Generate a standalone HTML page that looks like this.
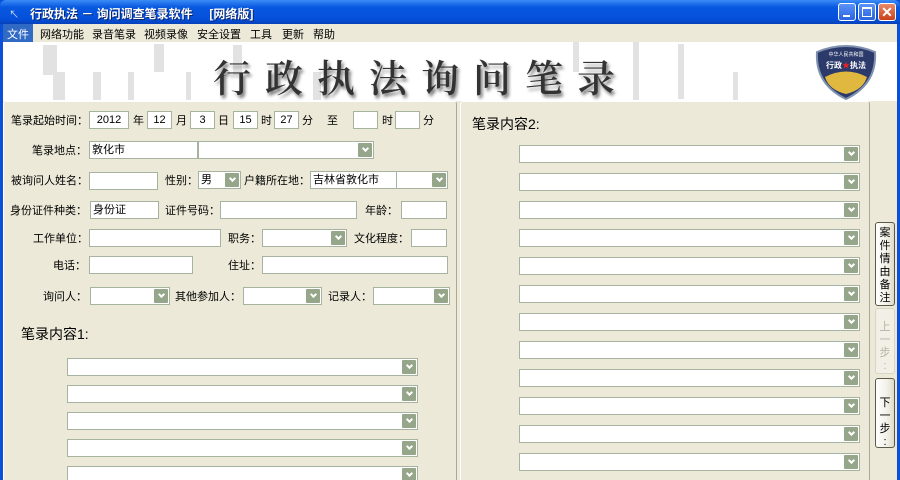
<!DOCTYPE html>
<html style="width:900px;height:480px;overflow:hidden"><head><meta charset="utf-8"><style>
*{margin:0;padding:0;box-sizing:border-box}
body{width:900px;height:480px;overflow:hidden;background:#0A50D8;font-family:"Liberation Sans","Noto Sans CJK SC",sans-serif;font-size:11px;color:#000;position:relative}
.a{position:absolute}
#title{left:0;top:0;width:900px;height:24px;background:linear-gradient(#3A8CF5,#0858E0 30%,#0550DA 80%,#0640B8);border-radius:6px 6px 0 0}
#title span{position:absolute;left:30px;top:5px;color:#fff;font-weight:bold;font-size:12px;text-shadow:1px 1px #0a246a;white-space:pre}
.wb{position:absolute;top:3px;width:18px;height:18px;border:1px solid #fff;border-radius:3px;background:linear-gradient(#5a93f8,#2a64e0)}
#menu{left:3px;top:24px;width:894px;height:18px;background:#ECE9D8}
#menu span{position:absolute;top:2px;font-size:11px}
#banner{left:3px;top:42px;width:894px;height:59px;background:#fff;overflow:hidden}
.bar{position:absolute;background:#e2e2e2}
#body{left:3px;top:101px;width:894px;height:379px;background:#ECE9D8;overflow:hidden}
.panel{position:absolute;border:1px solid #fff;border-right-color:#aca899;border-bottom-color:#aca899;border-radius:3px;background:#ECE9D8}
.in,.cb{position:absolute;height:18px;background:#fff;border:1px solid #a5b3a0;font-size:11px;padding:1px 2px;line-height:14px}
.cb:after{content:"";position:absolute;right:1px;top:1px;width:14px;height:14px;background:#96A68A;border-radius:1px}
.cb i{position:absolute;right:5px;top:4px;width:5px;height:5px;border-right:2px solid #fff;border-bottom:2px solid #fff;transform:rotate(45deg);z-index:2}
.l{position:absolute;font-size:11px;white-space:nowrap}
.c{text-align:center}
.btn{position:absolute;width:20px;border:1px solid #5a5a48;border-radius:3px;background:linear-gradient(90deg,#fff,#f3f1e8 60%,#dedbcb);font-size:11px;line-height:13px;text-align:center;padding-top:5px}
</style></head><body>
<div id="title" class="a"><span>行政执法 － 询问调查笔录软件     [网络版]</span>
<div style="position:absolute;left:9px;top:6px;color:#cde;font-size:10px">↖</div>
<div class="wb" style="left:838px"><div style="position:absolute;left:4px;top:11px;width:7px;height:2px;background:#fff"></div></div>
<div class="wb" style="left:858px"><div style="position:absolute;left:3px;top:3px;width:10px;height:10px;border:1px solid #fff;border-top-width:2px"></div></div>
<div class="wb" style="left:878px;background:linear-gradient(#e88a6a,#c9411a);color:#fff;font-weight:bold;font-size:14px;line-height:16px;text-align:center">✕</div>
</div>
<div id="menu" class="a">
<span style="left:0;top:0;height:18px;padding:2px 4px;background:#316AC5;color:#fff">文件</span>
<span style="left:37px">网络功能</span><span style="left:89px">录音笔录</span><span style="left:141px">视频录像</span><span style="left:194px">安全设置</span><span style="left:247px">工具</span><span style="left:279px">更新</span><span style="left:310px">帮助</span>
</div>
<div id="banner" class="a">
<div class="bar" style="left:40px;top:3px;width:14px;height:30px"></div>
<div class="bar" style="left:50px;top:30px;width:12px;height:28px"></div>
<div class="bar" style="left:90px;top:30px;width:8px;height:28px"></div>
<div class="bar" style="left:125px;top:30px;width:6px;height:28px"></div>
<div class="bar" style="left:151px;top:2px;width:10px;height:28px"></div>
<div class="bar" style="left:183px;top:30px;width:5px;height:28px"></div>
<div class="bar" style="left:230px;top:3px;width:9px;height:30px"></div>
<div class="bar" style="left:310px;top:30px;width:8px;height:28px"></div>
<div class="bar" style="left:570px;top:0;width:6px;height:30px"></div>
<div class="bar" style="left:630px;top:0;width:6px;height:58px"></div>
<div class="bar" style="left:675px;top:2px;width:6px;height:55px"></div>
<div class="bar" style="left:730px;top:30px;width:5px;height:28px"></div>
<div style="position:absolute;left:210px;top:6px;font-family:'Noto Serif CJK SC',serif;font-size:38px;font-weight:600;letter-spacing:14px;color:#333;text-shadow:2px 3px 3px #777;white-space:nowrap">行政执法询问笔录</div>
<svg style="position:absolute;left:810px;top:2px" width="66" height="56" viewBox="0 0 66 56"><path d="M4 8 Q33 -4 62 8 Q64 40 33 55 Q2 40 4 8Z" fill="#2b3a6a" stroke="#8090b0" stroke-width="2"/><path d="M12 33 Q33 22 54 33 Q50 46 33 50 Q16 46 12 33Z" fill="#e0b840"/><text x="33" y="12" font-size="5" fill="#fff" text-anchor="middle" font-family="Noto Sans CJK SC">中华人民共和国</text><text x="33" y="24" font-size="8" fill="#fff" text-anchor="middle" font-weight="bold" font-family="Noto Sans CJK SC">行政<tspan fill="#e22">★</tspan>执法</text></svg>
</div>
<div id="body" class="a">
<div class="panel" style="left:0;top:0;width:454px;height:390px"></div>
<div class="panel" style="left:457px;top:0;width:410px;height:390px"></div>
</div>

<div class="l" style="left:11px;top:112px">笔录起始时间：</div>
<div class="in c" style="left:89px;top:111px;width:40px">2012</div><div class="l" style="left:133px;top:112px">年</div>
<div class="in c" style="left:147px;top:111px;width:25px">12</div><div class="l" style="left:176px;top:112px">月</div>
<div class="in c" style="left:190px;top:111px;width:25px">3</div><div class="l" style="left:218px;top:112px">日</div>
<div class="in c" style="left:233px;top:111px;width:25px">15</div><div class="l" style="left:261px;top:112px">时</div>
<div class="in c" style="left:274px;top:111px;width:25px">27</div><div class="l" style="left:302px;top:112px">分</div>
<div class="l" style="left:327px;top:112px">至</div>
<div class="in" style="left:353px;top:111px;width:25px"></div><div class="l" style="left:382px;top:112px">时</div>
<div class="in" style="left:395px;top:111px;width:25px"></div><div class="l" style="left:423px;top:112px">分</div>

<div class="l" style="left:32px;top:142px">笔录地点：</div>
<div class="in" style="left:89px;top:141px;width:109px">敦化市</div>
<div class="cb" style="left:198px;top:141px;width:176px"><i></i></div>

<div class="l" style="left:11px;top:172px">被询问人姓名：</div>
<div class="in" style="left:89px;top:172px;width:69px"></div>
<div class="l" style="left:165px;top:172px">性别：</div>
<div class="cb" style="left:198px;top:171px;width:43px">男<i></i></div>
<div class="l" style="left:244px;top:172px">户籍所在地：</div>
<div class="in" style="left:310px;top:171px;width:87px">吉林省敦化市</div>
<div class="cb" style="left:396px;top:171px;width:52px"><i></i></div>

<div class="l" style="left:10px;top:202px">身份证件种类：</div>
<div class="in" style="left:90px;top:201px;width:69px">身份证</div>
<div class="l" style="left:165px;top:202px">证件号码：</div>
<div class="in" style="left:220px;top:201px;width:137px"></div>
<div class="l" style="left:365px;top:202px">年龄：</div>
<div class="in" style="left:401px;top:201px;width:46px"></div>

<div class="l" style="left:33px;top:230px">工作单位：</div>
<div class="in" style="left:89px;top:229px;width:132px"></div>
<div class="l" style="left:228px;top:230px">职务：</div>
<div class="cb" style="left:262px;top:229px;width:85px"><i></i></div>
<div class="l" style="left:354px;top:230px">文化程度：</div>
<div class="in" style="left:411px;top:229px;width:36px"></div>

<div class="l" style="left:53px;top:257px">电话：</div>
<div class="in" style="left:89px;top:256px;width:104px"></div>
<div class="l" style="left:228px;top:257px">住址：</div>
<div class="in" style="left:262px;top:256px;width:186px"></div>

<div class="l" style="left:43px;top:288px">询问人：</div>
<div class="cb" style="left:90px;top:287px;width:80px"><i></i></div>
<div class="l" style="left:175px;top:288px">其他参加人：</div>
<div class="cb" style="left:243px;top:287px;width:79px"><i></i></div>
<div class="l" style="left:328px;top:288px">记录人：</div>
<div class="cb" style="left:373px;top:287px;width:77px"><i></i></div>

<div class="l" style="left:21px;top:324px;font-size:14px">笔录内容1:</div>
<div class="cb" style="left:67px;top:358px;width:351px"><i></i></div>
<div class="cb" style="left:67px;top:385px;width:351px"><i></i></div>
<div class="cb" style="left:67px;top:412px;width:351px"><i></i></div>
<div class="cb" style="left:67px;top:439px;width:351px"><i></i></div>
<div class="cb" style="left:67px;top:466px;width:351px"><i></i></div>

<div class="l" style="left:472px;top:114px;font-size:14px">笔录内容2:</div>
<div class="cb" style="left:519px;top:145px;width:341px"><i></i></div>
<div class="cb" style="left:519px;top:173px;width:341px"><i></i></div>
<div class="cb" style="left:519px;top:201px;width:341px"><i></i></div>
<div class="cb" style="left:519px;top:229px;width:341px"><i></i></div>
<div class="cb" style="left:519px;top:257px;width:341px"><i></i></div>
<div class="cb" style="left:519px;top:285px;width:341px"><i></i></div>
<div class="cb" style="left:519px;top:313px;width:341px"><i></i></div>
<div class="cb" style="left:519px;top:341px;width:341px"><i></i></div>
<div class="cb" style="left:519px;top:369px;width:341px"><i></i></div>
<div class="cb" style="left:519px;top:397px;width:341px"><i></i></div>
<div class="cb" style="left:519px;top:425px;width:341px"><i></i></div>
<div class="cb" style="left:519px;top:453px;width:341px"><i></i></div>

<div class="btn" style="left:875px;top:222px;height:84px;padding-top:4px">案<br>件<br>情<br>由<br>备<br>注</div>
<div class="btn" style="left:875px;top:308px;height:66px;border-color:#d8d5c6;color:#b5b2a5;background:#f2f0e6;padding-top:12px">上<br>一<br>步<br>:</div>
<div class="btn" style="left:875px;top:378px;height:70px;padding-top:18px">下<br>一<br>步<br>:</div>
</body></html>
